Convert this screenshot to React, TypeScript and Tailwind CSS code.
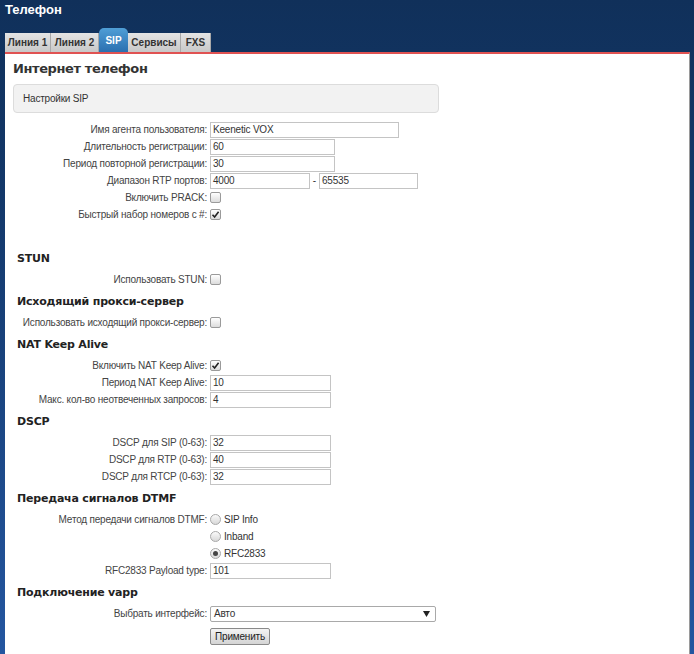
import React from "react";

const F = { fontFamily: '"Liberation Sans", Arial, sans-serif' };
const H = { fontFamily: '"DejaVu Sans", Verdana, sans-serif' };

function Checkbox({ checked }: { checked?: boolean }) {
  return (
    <span className="inline-flex h-[11px] w-[11px] items-center justify-center rounded-[2px] border border-[#9a9a9a] bg-gradient-to-b from-[#ffffff] to-[#dcdcdc]">
      {checked && (
        <svg width="9" height="9" viewBox="0 0 9 9">
          <path d="M1.5 4.8 L3.6 7 L7.6 1.8" fill="none" stroke="#222" strokeWidth="1.6" />
        </svg>
      )}
    </span>
  );
}

function Radio({ checked }: { checked?: boolean }) {
  return (
    <span className="inline-flex h-[11px] w-[11px] items-center justify-center rounded-full border border-[#a8a8a8] bg-gradient-to-b from-[#fafafa] to-[#d8d8d8]">
      {checked && <span className="h-[5px] w-[5px] rounded-full bg-[#444]" />}
    </span>
  );
}

function Input({ value, w }: { value: string; w: string }) {
  return (
    <div
      className={`flex h-[16px] items-center border border-[#c4c4c4] bg-white pl-[2px] text-[10px] tracking-[-0.2px] text-[#333] ${w}`}
    >
      {value}
    </div>
  );
}

function Row({ label, children }: { label?: string; children: React.ReactNode }) {
  return (
    <div className="flex h-[17px] items-center">
      <div className="w-[197px] shrink-0 whitespace-nowrap pr-[3px] text-right text-[10px] tracking-[-0.2px] text-[#444]">
        {label}
      </div>
      <div className="flex items-center">{children}</div>
    </div>
  );
}

function Heading({ children, className = "" }: { children: React.ReactNode; className?: string }) {
  return (
    <div className={`pb-[5px] pl-[4px] pt-[7px] ${className}`}>
      <div
        style={H}
        className="h-[14px] text-[11px] font-bold leading-[14px] tracking-[-0.2px] text-[#222]"
      >
        {children}
      </div>
    </div>
  );
}

function Tab({ label, w }: { label: string; w: string }) {
  return (
    <div
      className={`flex h-[19px] items-center justify-center border-r border-[#a9a9a9] bg-gradient-to-b from-[#e4e4e4] to-[#c8c8c8] text-[10px] font-bold text-[#333] ${w}`}
    >
      {label}
    </div>
  );
}

export default function App() {
  return (
    <div
      style={F}
      className="h-[654px] w-[694px] overflow-hidden bg-gradient-to-b from-[#10305a] via-[#13386a] via-30% to-[#2456a0]"
    >
      <div className="flex h-[28px] items-center pb-[8px] pl-[5px] text-[13px] font-bold text-white">
        Телефон
      </div>
      <div className="flex h-[24px] items-end pl-[5px]">
        <Tab label="Линия 1" w="w-[46px]" />
        <Tab label="Линия 2" w="w-[48px]" />
        <div className="flex h-[24px] w-[29px] items-center justify-center rounded-t-[5px] bg-gradient-to-b from-[#4f9ed6] to-[#2b70b0] text-[10px] font-bold text-white">
          SIP
        </div>
        <Tab label="Сервисы" w="w-[53px]" />
        <Tab label="FXS" w="w-[30px]" />
      </div>
      <div className="ml-[5px] mr-[4px] h-[620px] border-r border-t-2 border-r-[#9a9a9a] border-t-[#e05252] bg-white pl-[8px]">
        <div
          style={H}
          className="mt-[7px] h-[16px] text-[13px] font-bold leading-[16px] tracking-[-0.4px] text-[#333]"
        >
          Интернет телефон
        </div>
        <div className="mt-[7px] flex h-[29px] w-[426px] items-center rounded-[4px] border border-[#dcdcdc] bg-[#f2f2f2] pl-[9px] text-[10px] tracking-[-0.2px] text-[#333]">
          Настройки SIP
        </div>
        <div className="mt-[8px]">
          <Row label="Имя агента пользователя:">
            <Input value="Keenetic VOX" w="w-[189px]" />
          </Row>
          <Row label="Длительность регистрации:">
            <Input value="60" w="w-[125px]" />
          </Row>
          <Row label="Период повторной регистрации:">
            <Input value="30" w="w-[125px]" />
          </Row>
          <Row label="Диапазон RTP портов:">
            <Input value="4000" w="w-[100px]" />
            <span className="w-[9px] text-center text-[10px] text-[#333]">-</span>
            <Input value="65535" w="w-[99px]" />
          </Row>
          <Row label="Включить PRACK:">
            <Checkbox />
          </Row>
          <Row label="Быстрый набор номеров с #:">
            <Checkbox checked />
          </Row>
        </div>

        <Heading className="mt-[22px]">STUN</Heading>
        <Row label="Использовать STUN:">
          <Checkbox />
        </Row>

        <Heading>Исходящий прокси-сервер</Heading>
        <Row label="Использовать исходящий прокси-сервер:">
          <Checkbox />
        </Row>

        <Heading>NAT Keep Alive</Heading>
        <Row label="Включить NAT Keep Alive:">
          <Checkbox checked />
        </Row>
        <Row label="Период NAT Keep Alive:">
          <Input value="10" w="w-[121px]" />
        </Row>
        <Row label="Макс. кол-во неотвеченных запросов:">
          <Input value="4" w="w-[121px]" />
        </Row>

        <Heading>DSCP</Heading>
        <Row label="DSCP для SIP (0-63):">
          <Input value="32" w="w-[121px]" />
        </Row>
        <Row label="DSCP для RTP (0-63):">
          <Input value="40" w="w-[121px]" />
        </Row>
        <Row label="DSCP для RTCP (0-63):">
          <Input value="32" w="w-[121px]" />
        </Row>

        <Heading>Передача сигналов DTMF</Heading>
        <Row label="Метод передачи сигналов DTMF:">
          <Radio />
          <span className="ml-[3px] text-[10px] tracking-[-0.2px] text-[#333]">SIP Info</span>
        </Row>
        <Row>
          <Radio />
          <span className="ml-[3px] text-[10px] tracking-[-0.2px] text-[#333]">Inband</span>
        </Row>
        <Row>
          <Radio checked />
          <span className="ml-[3px] text-[10px] tracking-[-0.2px] text-[#333]">RFC2833</span>
        </Row>
        <Row label="RFC2833 Payload type:">
          <Input value="101" w="w-[121px]" />
        </Row>

        <Heading>Подключение vapp</Heading>
        <Row label="Выбрать интерфейс:">
          <div className="flex h-[16px] w-[226px] items-center justify-between rounded-[2px] border border-[#a9a9a9] bg-white pl-[3px] pr-[5px] text-[10px] tracking-[-0.2px] text-[#333]">
            <span>Авто</span>
            <svg width="7" height="6" viewBox="0 0 7 6">
              <path d="M0 0 H7 L3.5 6 Z" fill="#222" />
            </svg>
          </div>
        </Row>
        <div className="mt-[6px] flex">
          <div className="w-[197px] shrink-0" />
          <div className="flex h-[17px] w-[60px] items-center justify-center rounded-[2px] border border-[#8a8a8a] bg-gradient-to-b from-[#f4f4f4] to-[#d4d4d4] text-[10px] tracking-[-0.2px] text-[#222]">
            Применить
          </div>
        </div>
      </div>
    </div>
  );
}
